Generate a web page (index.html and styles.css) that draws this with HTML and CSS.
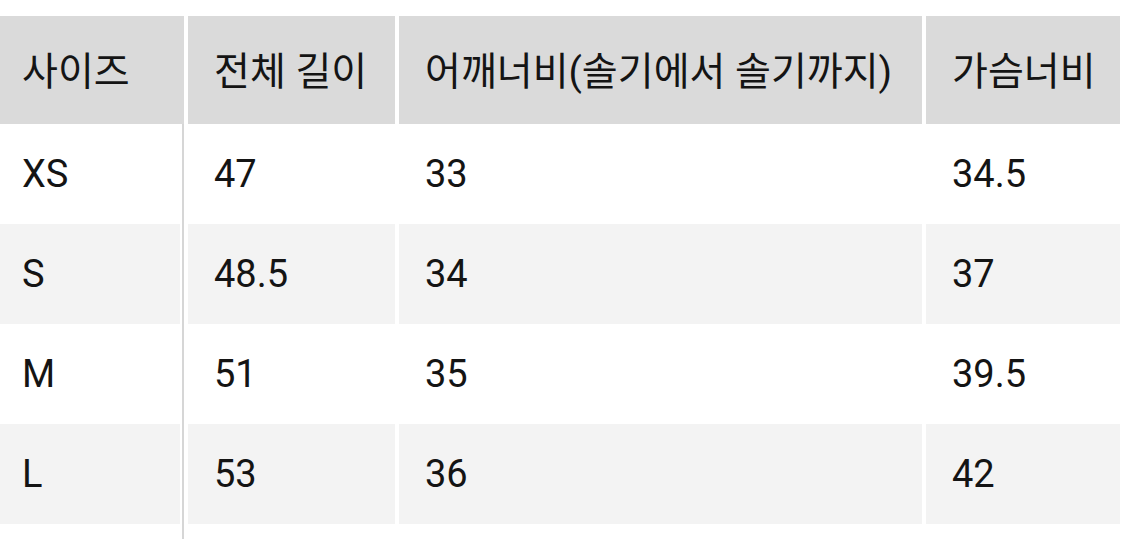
FILE: index.html
```html
<!DOCTYPE html>
<html lang="ko">
<head>
<meta charset="utf-8">
<title>사이즈</title>
<link rel="stylesheet" href="styles.css">
</head>
<body>
<div class="wrap">
  <table class="size-table">
    <thead>
      <tr>
        <th class="c1">사이즈</th>
        <th class="c2">전체 길이</th>
        <th class="c3">어깨너비(솔기에서 솔기까지)</th>
        <th class="c4">가슴너비</th>
      </tr>
    </thead>
    <tbody>
      <tr><td class="c1">XS</td><td>47</td><td>33</td><td>34.5</td></tr>
      <tr class="alt"><td class="c1">S</td><td>48.5</td><td>34</td><td>37</td></tr>
      <tr><td class="c1">M</td><td>51</td><td>35</td><td>39.5</td></tr>
      <tr class="alt"><td class="c1">L</td><td>53</td><td>36</td><td>42</td></tr>
    </tbody>
  </table>
</div>
</body>
</html>
```
FILE: styles.css
```css
html, body {
  margin: 0;
  padding: 0;
  background: #ffffff;
  overflow: hidden;
}
.wrap {
  position: relative;
  height: 539px;
  padding-top: 16px;
  box-sizing: border-box;
}
.wrap::after {
  content: "";
  position: absolute;
  left: 182px;
  top: 124px;
  bottom: 0;
  width: 2px;
  background: #d6d6d6;
}
.size-table {
  margin-left: -4px;
  border-collapse: separate;
  border-spacing: 4px 0;
  table-layout: fixed;
  width: 1128px;
  font-family: Roboto, "Noto Sans CJK KR", sans-serif;
  color: #141414;
}
.size-table th,
.size-table td {
  text-align: left;
  font-weight: 400;
  padding: 0 0 0 26px;
  vertical-align: middle;
  white-space: nowrap;
  box-sizing: border-box;
}
.size-table th {
  background: #dadada;
  height: 108px;
  font-size: 39px;
  padding-bottom: 4px;
}
.size-table td {
  height: 100px;
  font-size: 38px;
}
.size-table th.c1 { width: 184px; padding-left: 22px; }
.size-table th.c2 { width: 207px; }
.size-table th.c3 { width: 523px; }
.size-table th.c4 { width: 194px; }
.size-table td.c1 {
  padding-left: 22px;
  border-right: 4px solid #ffffff;
}
.size-table tr.alt td {
  background: #f3f3f3;
}
```
